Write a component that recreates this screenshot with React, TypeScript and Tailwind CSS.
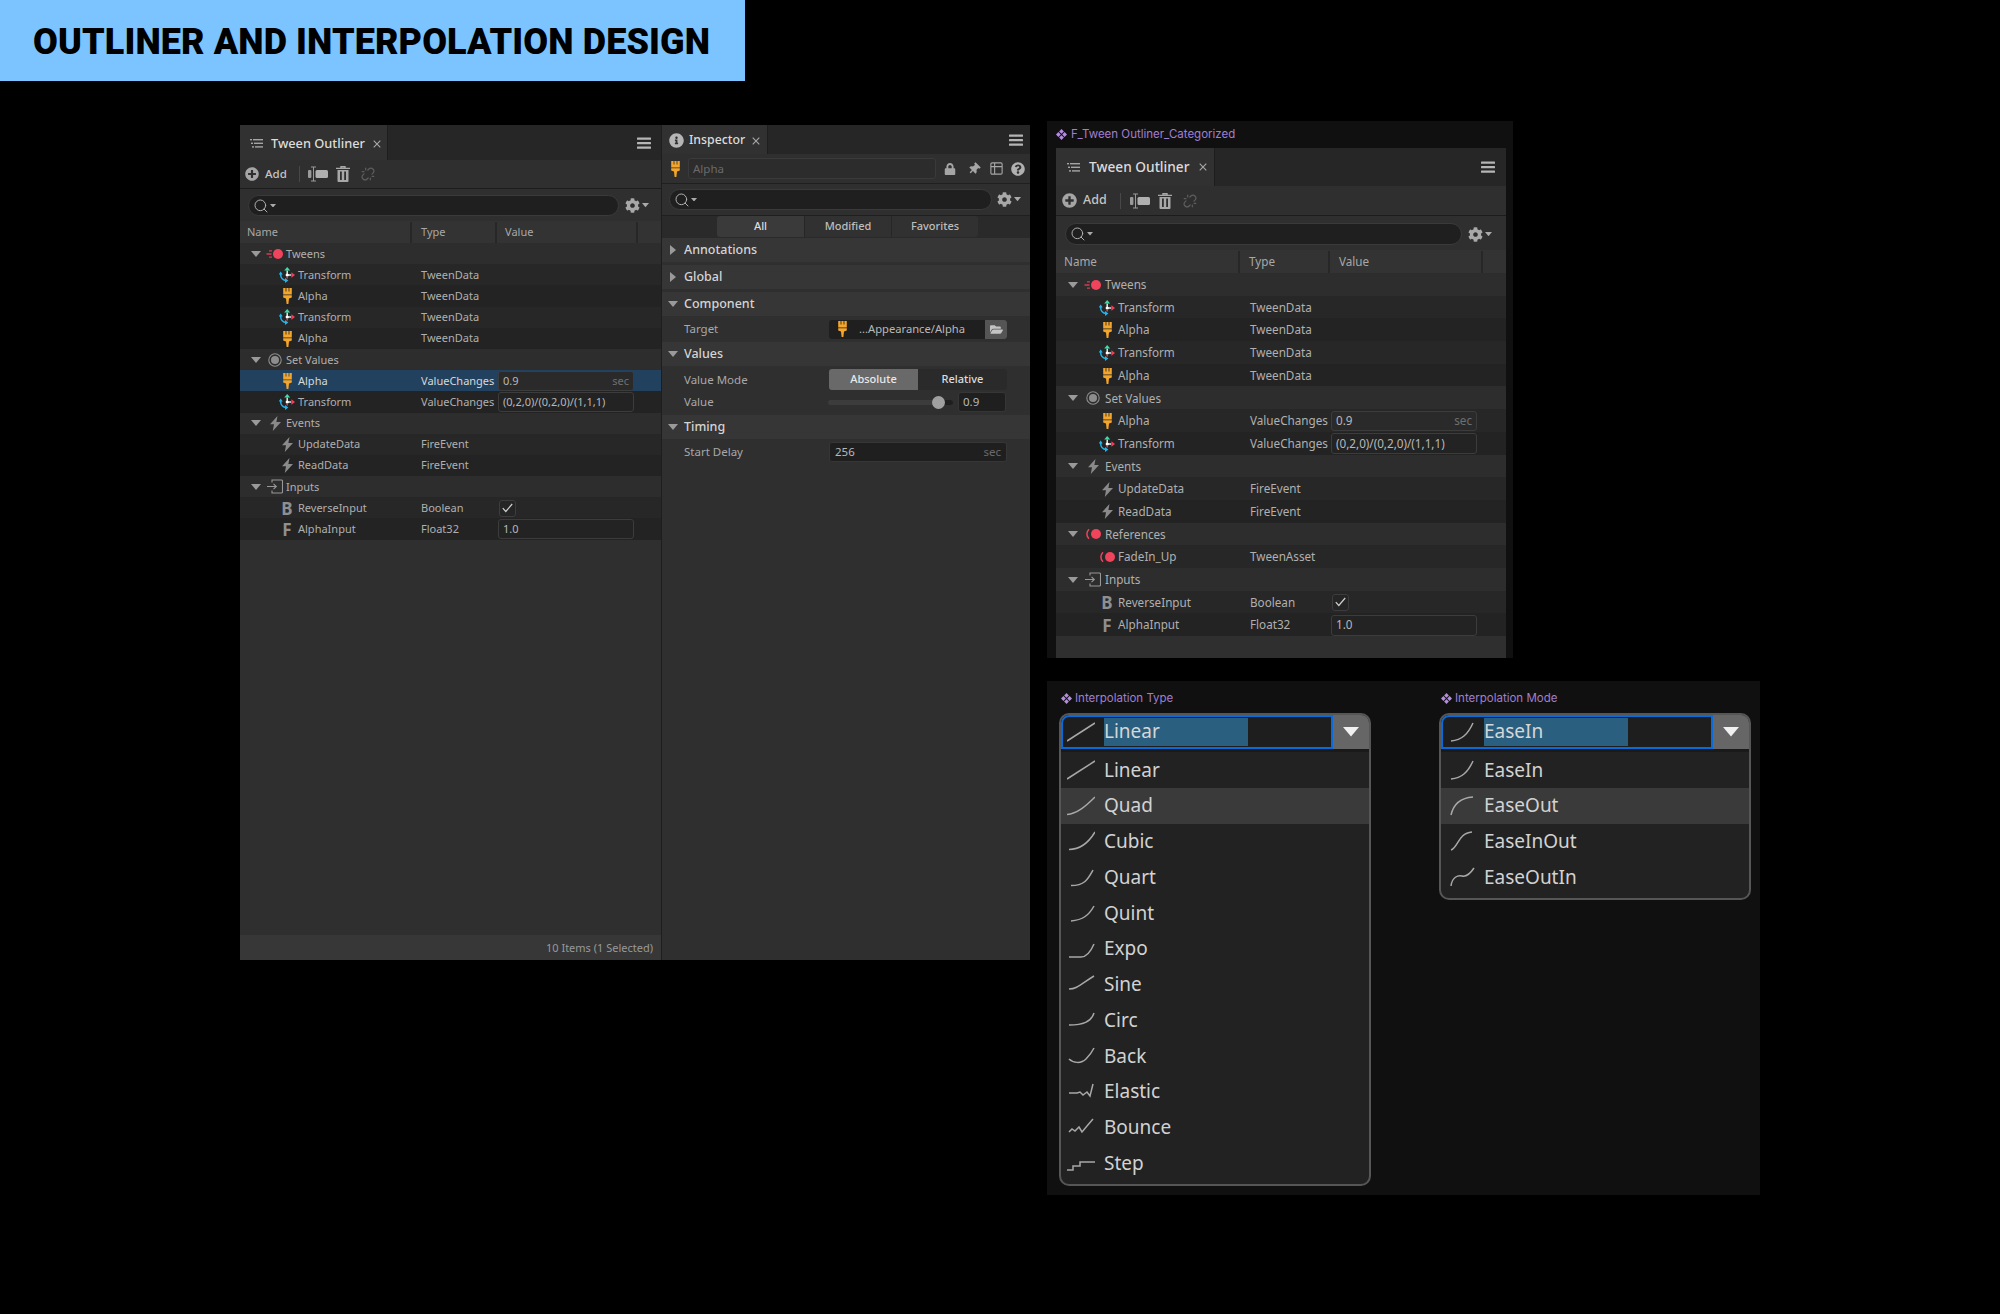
import React from "react";
import { FaCog, FaPlusCircle, FaLock, FaThumbtack, FaQuestionCircle, FaInfoCircle, FaFolderOpen } from "react-icons/fa";
import { Table2, Unlink, Search } from "lucide-react";

type Size = "small" | "big";

const Hamburger = () => (
  <svg width="14" height="12" viewBox="0 0 14 12" fill="#b5b5b5">
    <rect x="0" y="0.5" width="14" height="2.2" rx="0.5" />
    <rect x="0" y="5" width="14" height="2.2" rx="0.5" />
    <rect x="0" y="9.5" width="14" height="2.2" rx="0.5" />
  </svg>
);
const ListIcon = () => (
  <svg width="13" height="9" viewBox="0 0 13 9" fill="#a5a5a5">
    <rect x="0" y="0" width="2" height="1.4" />
    <rect x="3" y="0" width="10" height="1.4" />
    <rect x="1" y="3.6" width="2" height="1.4" />
    <rect x="4" y="3.6" width="9" height="1.4" />
    <rect x="2" y="7.2" width="2" height="1.4" />
    <rect x="5" y="7.2" width="8" height="1.4" />
  </svg>
);
const CloseX = () => (
  <svg width="8" height="8" viewBox="0 0 8 8" fill="none">
    <path d="M0.7 0.7l6.6 6.6M7.3 0.7L0.7 7.3" stroke="#a8a8a8" strokeWidth="1.1" />
  </svg>
);
const SplitIcon = () => (
  <svg width="20" height="16" viewBox="0 0 20 16">
    <path d="M3 1h5M3 15h5M5.5 1v14" stroke="#9a9a9a" strokeWidth="1" fill="none" />
    <rect x="0" y="4" width="3.4" height="8" rx="1" fill="#9a9a9a" />
    <rect x="7.5" y="4" width="12.5" height="8" rx="1.5" fill="#b0b0b0" />
  </svg>
);
const TrashIcon = () => (
  <svg width="14" height="16" viewBox="0 0 14 16">
    <path d="M0 2.4h14M5 2V.7h4V2" stroke="#a8a8a8" strokeWidth="1.4" fill="none" />
    <path d="M1.5 4h11v11a1 1 0 0 1-1 1h-9a1 1 0 0 1-1-1z" fill="#a8a8a8" />
    <rect x="4" y="5.5" width="1.8" height="8.5" fill="#2f2f2f" />
    <rect x="8.2" y="5.5" width="1.8" height="8.5" fill="#2f2f2f" />
  </svg>
);
const Caret = ({ color = "#aaaaaa", w = 6 }: { color?: string; w?: number }) => (
  <svg width={w} height={w * 0.6} viewBox="0 0 10 6"><path d="M0 0h10L5 6z" fill={color} /></svg>
);
const Diamonds = () => (
  <svg width="11" height="11" viewBox="0 0 11 11" fill="#b48ce0">
    <path d="M5.5 0l2.4 2.4-2.4 2.4-2.4-2.4zM2.4 3.1l2.4 2.4-2.4 2.4L0 5.5zM8.6 3.1L11 5.5 8.6 7.9 6.2 5.5zM5.5 6.2l2.4 2.4L5.5 11 3.1 8.6z" />
  </svg>
);
const Transform = () => (
  <svg width="16" height="16" viewBox="0 0 16 16" fill="none">
    <path d="M8.2 8V3.5" stroke="#ecf7f3" strokeWidth="1.4" />
    <path d="M8.2 0l3 3.6h-6z" fill="#3fdca5" />
    <path d="M8.2 8h4" stroke="#f4f4f4" strokeWidth="1.4" />
    <path d="M16 8l-3.6-2.8v5.6z" fill="#f2405a" />
    <path d="M1.7 6.5v1.3a5.6 5.6 0 0 0 4.8 5.6" stroke="#23b4ea" strokeWidth="1.5" />
    <path d="M-0.3 7.4L1.7 4.4l2 3zM6 11l3.4 2.4L6 16z" fill="#23b4ea" />
    <circle cx="8.2" cy="8" r="1.6" fill="#ffffff" />
    <path d="M8.2 9.4v2" stroke="#f04a60" strokeWidth="1.3" />
  </svg>
);
const Brush = () => (
  <svg width="11" height="16" viewBox="0 0 11 16" fill="#f3a62b">
    <path d="M1.2 0h2.4v3.4h0.8V0h2.2v3.4h0.8V0h2.4v6.4H1.2z" />
    <path d="M1.2 7.2h8.6v2.2L7 10.4 6.4 16H4.6L4 10.4 1.2 9.4z" />
  </svg>
);
const TweenDot = () => (
  <svg width="18" height="12" viewBox="0 0 18 12" fill="none">
    <circle cx="12" cy="6" r="5" fill="#f0435c" />
    <path d="M3 2.8h3M0.5 6h5M3 9.2h3" stroke="#d13b50" strokeWidth="1.3" />
  </svg>
);
const RefDot = () => (
  <svg width="17" height="12" viewBox="0 0 17 12" fill="none">
    <circle cx="11" cy="6" r="5" fill="#f0435c" />
    <path d="M4 1.2a6.5 6.5 0 0 0 0 9.6" stroke="#f0435c" strokeWidth="1.5" />
  </svg>
);
const Ring = () => (
  <svg width="14" height="14" viewBox="0 0 14 14" fill="none">
    <circle cx="7" cy="7" r="6.2" stroke="#8d8d8d" strokeWidth="1.1" />
    <circle cx="7" cy="7" r="4" fill="#8d8d8d" />
  </svg>
);
const Bolt = () => (
  <svg width="11" height="15" viewBox="0 0 11 15" fill="#8a8a8a">
    <path d="M7.5 0L0 8.2h4L2.8 15 11 6H6.4z" />
  </svg>
);
const InputIcon = () => (
  <svg width="16" height="15" viewBox="0 0 16 15" fill="none" stroke="#989898" strokeWidth="1.1">
    <path d="M5 3.5V1h9.5a1 1 0 0 1 1 1v11a1 1 0 0 1-1 1H5v-2.5" />
    <path d="M0 7.5h9M6.5 4.8l2.8 2.7-2.8 2.7" />
  </svg>
);
const Check = () => (
  <svg width="11" height="10" viewBox="0 0 11 10" fill="none">
    <path d="M0.8 5.2l3 3.3L10.2 1" stroke="#d0d0d0" strokeWidth="1.2" />
  </svg>
);

const Letter = ({ c }: { c: string }) => (
  <span className="text-[17px] font-bold leading-none text-[#8f8f8f]">{c}</span>
);

const icons: Record<string, React.ReactNode> = {
  transform: <Transform />,
  brush: <Brush />,
  tween: <TweenDot />,
  ref: <RefDot />,
  ring: <Ring />,
  bolt: <Bolt />,
  input: <InputIcon />,
  b: <Letter c="B" />,
  f: <Letter c="F" />,
};

type RowData = {
  kind: "cat" | "leaf";
  icon: string;
  name: string;
  type?: string;
  value?: string;
  sec?: boolean;
  check?: boolean;
  selected?: boolean;
  tone?: 0 | 1;
};

const smallRows: RowData[] = [
  { kind: "cat", icon: "tween", name: "Tweens" },
  { kind: "leaf", icon: "transform", name: "Transform", type: "TweenData", tone: 0 },
  { kind: "leaf", icon: "brush", name: "Alpha", type: "TweenData", tone: 1 },
  { kind: "leaf", icon: "transform", name: "Transform", type: "TweenData", tone: 0 },
  { kind: "leaf", icon: "brush", name: "Alpha", type: "TweenData", tone: 1 },
  { kind: "cat", icon: "ring", name: "Set Values" },
  { kind: "leaf", icon: "brush", name: "Alpha", type: "ValueChanges", value: "0.9", sec: true, selected: true },
  { kind: "leaf", icon: "transform", name: "Transform", type: "ValueChanges", value: "(0,2,0)/(0,2,0)/(1,1,1)", tone: 1 },
  { kind: "cat", icon: "bolt", name: "Events" },
  { kind: "leaf", icon: "bolt", name: "UpdateData", type: "FireEvent", tone: 0 },
  { kind: "leaf", icon: "bolt", name: "ReadData", type: "FireEvent", tone: 1 },
  { kind: "cat", icon: "input", name: "Inputs" },
  { kind: "leaf", icon: "b", name: "ReverseInput", type: "Boolean", check: true, tone: 0 },
  { kind: "leaf", icon: "f", name: "AlphaInput", type: "Float32", value: "1.0", tone: 1 },
];

const bigRows: RowData[] = [
  ...smallRows.slice(0, 6),
  { kind: "leaf", icon: "brush", name: "Alpha", type: "ValueChanges", value: "0.9", sec: true, tone: 0 },
  ...smallRows.slice(7, 11),
  { kind: "cat", icon: "ref", name: "References" },
  { kind: "leaf", icon: "ref", name: "FadeIn_Up", type: "TweenAsset", tone: 0 },
  ...smallRows.slice(11),
];

const sz = {
  small: {
    panel: "w-[421px] h-full",
    tabbar: "h-[35px]",
    tab: "w-[148px] pl-[10px] pt-[2px]",
    tabText: "ml-[8px] text-[12.8px]",
    closeMl: "ml-[8px]",
    menuPr: "pr-[10px]",
    toolbar: "h-[29px] pl-[5px]",
    addText: "ml-[6px] text-[11.5px]",
    sepMl: "ml-[12px]",
    splitMl: "ml-[8px]",
    trashMl: "ml-[8px]",
    unlinkMl: "ml-[11px]",
    searchRow: "h-[31px] mt-[1px] pl-[8px]",
    search: "w-[371px] h-[21px]",
    gearMl: "ml-[6px]",
    header: "h-[22px] text-[11px] pt-[1px]",
    col1: "w-[172px]",
    col2: "w-[85px]",
    col3: "w-[141px]",
    col1Pad: "pl-[7px]",
    col2Pad: "pl-[9px]",
    col3Pad: "pl-[8px]",
    row: "h-[21.2px] text-[11px] pt-[0.5px]",
    catPad: "pl-[11px]",
    catIcon: "ml-[5px] mr-[2px]",
    leafPad: "pl-[38px]",
    leafIcon: "mr-[2px]",
    typePad: "pl-[9px]",
    field: "w-[136px]",
  },
  big: {
    panel: "w-[450px] h-full",
    tabbar: "h-[38px]",
    tab: "w-[159px] pl-[11px]",
    tabText: "ml-[9px] text-[13.7px]",
    closeMl: "ml-[9px]",
    menuPr: "pr-[11px]",
    toolbar: "h-[30px] pl-[6px]",
    addText: "ml-[6px] text-[12.5px]",
    sepMl: "ml-[13px]",
    splitMl: "ml-[9px]",
    trashMl: "ml-[8px]",
    unlinkMl: "ml-[11px]",
    searchRow: "h-[32px] mt-[2px] pl-[9px]",
    search: "w-[397px] h-[22px]",
    gearMl: "ml-[6px]",
    header: "h-[23px] text-[11.7px] pt-[1px]",
    col1: "w-[184px]",
    col2: "w-[90px]",
    col3: "w-[153px]",
    col1Pad: "pl-[8px]",
    col2Pad: "pl-[9px]",
    col3Pad: "pl-[9px]",
    row: "h-[22.7px] text-[11.7px] pt-[1px]",
    catPad: "pl-[12px]",
    catIcon: "ml-[6px] mr-[3px]",
    leafPad: "pl-[42px]",
    leafIcon: "mr-[2px]",
    typePad: "pl-[10px]",
    field: "w-[146px]",
  },
};

function OutlinerRow({ r, s }: { r: RowData; s: typeof sz.small }) {
  const bg = r.selected
    ? "bg-[#21415f]"
    : r.kind === "cat"
      ? "bg-[#2d2d2d]"
      : r.tone === 0
        ? "bg-[#272727]"
        : "bg-[#232323]";
  const nameColor = r.selected ? "text-[#d8d8d8]" : "text-[#b0b0b0]";
  return (
    <div className={`flex items-center ${s.row} ${bg}`}>
      <div className={`${s.col1} shrink-0 flex items-center ${r.kind === "cat" ? s.catPad : s.leafPad}`}>
        {r.kind === "cat" && (
          <span className="w-[10px] flex justify-center">
            <Caret color="#9a9a9a" w={10} />
          </span>
        )}
        <span className={`w-[18px] h-[16px] flex items-center justify-center shrink-0 ${r.kind === "cat" ? s.catIcon : s.leafIcon}`}>
          {icons[r.icon]}
        </span>
        <span className={nameColor}>{r.name}</span>
      </div>
      <div className={`${s.col2} shrink-0 ${s.typePad} whitespace-nowrap ${r.selected ? "text-[#d8d8d8]" : "text-[#b0b0b0]"}`}>
        {r.type}
      </div>
      <div className="flex-1 h-full flex items-center pl-[1px]">
        {r.check && (
          <span className="ml-[1px] w-[17px] h-[17px] rounded-[3px] bg-[#252525] border border-[#3c3c3c] flex items-center justify-center">
            <Check />
          </span>
        )}
        {r.value && (
          <div
            className={`${s.field} h-[calc(100%-1px)] rounded-[3px] border border-[#3c3c3c] flex items-center justify-between px-[4px] text-[#b8b8b8] ${r.sec ? "bg-[#2a2a2a]" : "bg-[#232323]"}`}
          >
            <span>{r.value}</span>
            {r.sec && <span className="text-[#6f6f6f]">sec</span>}
          </div>
        )}
      </div>
    </div>
  );
}

function Outliner({ size, rows, footer }: { size: Size; rows: RowData[]; footer?: string }) {
  const s = sz[size];
  const big = size === "big";
  return (
    <div className={`${s.panel} flex flex-col bg-[#2f2f2f]`}>
      <div className={`${s.tabbar} flex items-stretch justify-between bg-[#262626] ${s.menuPr} shrink-0`}>
        <div className={`${s.tab} flex items-center bg-[#313131] border-r border-[#1e1e1e]`}>
          <ListIcon />
          <span className={`${s.tabText} font-medium text-[#dcdcdc]`}>Tween Outliner</span>
          <span className={`${s.closeMl} flex`}><CloseX /></span>
        </div>
        <div className="flex items-center">
          <Hamburger />
        </div>
      </div>
      <div className={`${s.toolbar} flex items-center bg-[#2f2f2f] border-b border-[#1c1c1c] shrink-0`}>
        <FaPlusCircle size={big ? 15 : 14} color="#a5a5a5" />
        <span className={`${s.addText} font-medium text-[#c4c4c4]`}>Add</span>
        <span className={`${s.sepMl} w-[1px] h-[16px] bg-[#484848]`} />
        <span className={s.splitMl}><SplitIcon /></span>
        <span className={`${s.trashMl} flex`}><TrashIcon /></span>
        <span className={`${s.unlinkMl} flex`}><Unlink size={14} color="#5e5e5e" strokeWidth={2} /></span>
      </div>
      <div className={`${s.searchRow} flex items-center bg-[#2f2f2f] shrink-0`}>
        <div className={`${s.search} rounded-full bg-[#1f1f1f] border border-[#3a3a3a] flex items-center pl-[4px] gap-[1px]`}>
          <Search size={16} color="#b0b0b0" strokeWidth={1.5} />
          <Caret />
        </div>
        <span className={`${s.gearMl} flex items-center gap-[2px]`}>
          <FaCog size={15} color="#a8a8a8" />
          <Caret w={7} />
        </span>
      </div>
      <div className={`${s.header} flex items-stretch bg-[#333333] text-[#a8a8a8] shrink-0`}>
        <div className={`${s.col1} ${s.col1Pad} flex items-center border-r-2 border-[#272727]`}>Name</div>
        <div className={`${s.col2} ${s.col2Pad} flex items-center border-r-2 border-[#272727]`}>Type</div>
        <div className={`${s.col3} ${s.col3Pad} flex items-center border-r-2 border-[#272727]`}>Value</div>
      </div>
      <div className="flex flex-col shrink-0">
        {rows.map((r, i) => (
          <OutlinerRow key={i} r={r} s={s} />
        ))}
      </div>
      <div className="flex-1" />
      {footer && (
        <div className="h-[25px] bg-[#373737] flex items-center justify-end pr-[8px] pt-[1px] text-[11px] text-[#999999] shrink-0">
          {footer}
        </div>
      )}
    </div>
  );
}

function Section({ title, open, mt }: { title: string; open?: boolean; mt?: boolean }) {
  return (
    <div className={`h-[24px] flex items-center bg-[#363636] shrink-0 ${mt ? "mt-[3px]" : ""}`}>
      <span className="w-[22px] flex justify-center">
        {open ? (
          <Caret color="#9a9a9a" w={10} />
        ) : (
          <svg width="6" height="10" viewBox="0 0 6 10"><path d="M0 0l6 5-6 5z" fill="#9a9a9a" /></svg>
        )}
      </span>
      <span className="text-[12.5px] font-medium text-[#d4d4d4] pt-[1px]">{title}</span>
    </div>
  );
}

function Inspector() {
  return (
    <div className="w-[369px] h-full flex flex-col bg-[#2f2f2f] border-l border-[#1e1e1e] text-[11.5px]">
      <div className="h-[29px] flex items-stretch justify-between bg-[#262626] pr-[7px] shrink-0">
        <div className="w-[106px] flex items-center pl-[7px] pt-[2px] bg-[#313131] border-r border-[#1e1e1e]">
          <FaInfoCircle size={15} color="#b5b5b5" />
          <span className="ml-[5px] text-[12.3px] font-medium text-[#dcdcdc]">Inspector</span>
          <span className="ml-[7px] flex"><CloseX /></span>
        </div>
        <div className="flex items-center"><Hamburger /></div>
      </div>
      <div className="h-[30px] flex items-center pl-[8px] bg-[#2f2f2f] border-b border-[#1f1f1f] shrink-0">
        <Brush />
        <div className="ml-[7px] w-[248px] h-[21px] rounded-[3px] bg-[#2c2c2c] border border-[#3a3a3a] flex items-center pl-[4px] text-[#6a6a6a]">
          Alpha
        </div>
        <span className="ml-[8px]"><FaLock size={12} color="#a5a5a5" /></span>
        <span className="ml-[12px] rotate-45"><FaThumbtack size={12} color="#a5a5a5" /></span>
        <span className="ml-[9px]"><Table2 size={15} color="#a5a5a5" strokeWidth={1.8} /></span>
        <span className="ml-[7px]"><FaQuestionCircle size={14} color="#b0b0b0" /></span>
      </div>
      <div className="h-[31px] flex items-center pl-[7px] bg-[#2f2f2f] shrink-0">
        <div className="w-[323px] h-[21px] rounded-full bg-[#1f1f1f] border border-[#3a3a3a] flex items-center pl-[4px] gap-[1px]">
          <Search size={16} color="#b0b0b0" strokeWidth={1.5} />
          <Caret />
        </div>
        <span className="ml-[5px] flex items-center gap-[2px]">
          <FaCog size={15} color="#a8a8a8" />
          <Caret w={7} />
        </span>
      </div>
      <div className="h-[23px] pl-[55px] flex items-stretch bg-[#2a2a2a] border-t border-[#1f1f1f] shrink-0">
        <div className="w-[87px] h-[21px] bg-[#3a3a3a] rounded-l-[3px] flex items-center justify-center font-medium text-[#dcdcdc] text-[11px]">All</div>
        <div className="w-[87px] h-[21px] bg-[#313131] border-l border-[#262626] flex items-center justify-center font-medium text-[#bdbdbd] text-[11px]">Modified</div>
        <div className="w-[87px] h-[21px] bg-[#313131] border-l border-[#262626] rounded-r-[3px] flex items-center justify-center font-medium text-[#bdbdbd] text-[11px]">Favorites</div>
      </div>
      <Section title="Annotations" />
      <Section title="Global" mt />
      <Section title="Component" open mt />
      <div className="h-[26px] flex items-center pl-[22px] shrink-0">
        <span className="w-[145px] text-[#a8a8a8]">Target</span>
        <div className="w-[178px] h-[19px] rounded-[3px] bg-[#1f1f1f] flex items-center overflow-hidden">
          <span className="ml-[8px] flex"><Brush /></span>
          <span className="ml-[11px] text-[11.2px] text-[#b8b8b8]">...Appearance/Alpha</span>
          <span className="ml-auto w-[22px] h-full bg-[#555555] flex items-center justify-center">
            <FaFolderOpen size={13} color="#c4c4c4" />
          </span>
        </div>
      </div>
      <Section title="Values" open />
      <div className="mt-[3px] h-[21px] flex items-center pl-[22px] shrink-0">
        <span className="w-[145px] text-[#a8a8a8]">Value Mode</span>
        <div className="w-[178px] h-full flex rounded-[3px] overflow-hidden font-medium text-[11px]">
          <span className="w-[89px] bg-[#696969] text-[#e8e8e8] flex items-center justify-center">Absolute</span>
          <span className="flex-1 bg-[#2a2a2a] text-[#dcdcdc] flex items-center justify-center">Relative</span>
        </div>
      </div>
      <div className="mt-[2px] h-[20px] flex items-center pl-[22px] shrink-0">
        <span className="w-[144px] text-[#a8a8a8]">Value</span>
        <div className="relative w-[125px] h-[5px] rounded-full bg-[#3c3c3c]">
          <span className="absolute right-0 w-[15px] h-full rounded-r-full bg-[#1f1f1f]" />
          <span className="absolute left-[104px] top-[-4px] w-[13px] h-[13px] rounded-full bg-[#a0a0a0]" />
        </div>
        <div className="ml-[5px] w-[48px] h-[20px] rounded-[3px] bg-[#1f1f1f] border border-[#363636] flex items-center pl-[4px] text-[#b8b8b8]">0.9</div>
      </div>
      <Section title="Timing" open mt />
      <div className="h-[26px] flex items-center pl-[22px] shrink-0">
        <span className="w-[145px] text-[#a8a8a8]">Start Delay</span>
        <div className="w-[178px] h-[20px] rounded-[3px] bg-[#1f1f1f] border border-[#363636] flex items-center justify-between px-[5px] text-[#b8b8b8]">
          <span>256</span>
          <span className="text-[#6a6a6a]">sec</span>
        </div>
      </div>
      <div className="flex-1" />
    </div>
  );
}

const curves: Record<string, string> = {
  Linear: "M0 19L28 1",
  Quad: "M0 18.5C10 17.5 18 11 28 1",
  Cubic: "M2 18.5C14 18.5 22 11 28 1",
  Quart: "M4 18.5C18 18.5 21 12 26 3",
  Quint: "M4 18C16 17 22 12 27 3",
  Expo: "M2 18H14C20 18 24 12 27 5",
  Sine: "M2 15C10 15 14 10 27 2",
  Circ: "M2 15C16 15 24 12 27 3",
  Back: "M2 13C6 17 14 18 19 13C22 10 25 6 27 2",
  Elastic: "M2 11H10L13 10L16 13L20 10L23 14L26 2",
  Bounce: "M2 15L5 12L8 14L12 10L15 15L20 9L26 2",
  Step: "M0 17H6V13H13V9H28",
  EaseIn: "M1 19C12 18 18 12 23 1",
  EaseOut: "M1 19C3 10 9 2 23 1",
  EaseInOut: "M1 19C8 17 8 2 22 1",
  EaseOutIn: "M1 19C2 10 8 8 12 9C16 10 20 7 24 1",
};

const Curve = ({ n }: { n: string }) => (
  <svg width="28" height="20" viewBox="0 0 28 20" fill="none" className="shrink-0">
    <path d={curves[n]} stroke="#a8a8a8" strokeWidth="1.5" />
  </svg>
);

function Dropdown({
  label, value, items, rowPad, inputPad, gap,
}: { label: string; value: string; items: string[]; rowPad: string; inputPad: string; gap: string }) {
  return (
    <div className="w-[312px]">
      <div className="h-[32px] flex items-center pl-[2px] pt-[3px] gap-[3px] text-[11.5px] font-['Inter'] text-[#a07fd0]">
        <Diamonds />
        <span>{label}</span>
      </div>
      <div className="rounded-[10px] border-2 border-[#565656] bg-[#222222] overflow-hidden">
        <div className="h-[34px] flex items-stretch">
          <div className={`w-[272px] border-2 border-[#0a6ad8] rounded-tl-[8px] bg-[#1e1e1e] flex items-center ${inputPad}`}>
            <Curve n={value} />
            <span className={`w-[144px] h-[28px] ${gap} bg-[#2b5f80] flex items-center text-[19px] text-[#d6d6d6] pb-[1px]`}>{value}</span>
          </div>
          <div className="flex-1 bg-[#666666] flex items-center justify-center">
            <Caret color="#f0f0f0" w={16} />
          </div>
        </div>
        <div className="h-[3px] bg-[#1a1a1a]" />
        <div className="flex flex-col">
          {items.map((it, i) => (
            <div key={it} className={`h-[35.75px] flex items-center ${rowPad} ${i === 1 ? "bg-[#3a3a3a]" : ""}`}>
              <Curve n={it} />
              <span className={`${gap} text-[19px] text-[#d2d2d2]`}>{it}</span>
            </div>
          ))}
        </div>
        <div className="h-[3px]" />
      </div>
    </div>
  );
}

export default function App() {
  return (
    <div className="w-[2000px] h-[1314px] bg-black overflow-hidden font-['Noto_Sans',sans-serif]">
      <div className="w-[745px] h-[81px] bg-[#7cc4ff] flex items-center pl-[33px] pt-[2px]">
        <h1 className="font-['Roboto',sans-serif] font-black text-[36px] tracking-[0.1px] leading-none text-black whitespace-nowrap">
          OUTLINER AND INTERPOLATION DESIGN
        </h1>
      </div>
      <div className="flex items-start pl-[240px] pt-[40px]">
        <div className="mt-[4px] w-[790px] h-[835px] flex">
          <Outliner size="small" rows={smallRows} footer="10 Items (1 Selected)" />
          <Inspector />
        </div>
        <div className="ml-[17px] w-[713px] flex flex-col">
          <div className="w-[466px] h-[537px] bg-[#101010] flex flex-col">
            <div className="h-[27px] flex items-center pl-[9px] gap-[4px] text-[11.5px] font-['Inter'] text-[#a07fd0]">
              <Diamonds />
              <span>F_Tween Outliner_Categorized</span>
            </div>
            <div className="ml-[9px] flex-1 min-h-0">
              <Outliner size="big" rows={bigRows} />
            </div>
          </div>
          <div className="mt-[23px] h-[514px] bg-[#101010] flex items-start pl-[12px] gap-[68px]">
            <Dropdown
              label="Interpolation Type"
              value="Linear"
              rowPad="pl-[6px]"
              inputPad="pl-[4px]"
              gap="ml-[9px]"
              items={["Linear", "Quad", "Cubic", "Quart", "Quint", "Expo", "Sine", "Circ", "Back", "Elastic", "Bounce", "Step"]}
            />
            <Dropdown
              label="Interpolation Mode"
              value="EaseIn"
              rowPad="pl-[9px]"
              inputPad="pl-[7px]"
              gap="ml-[6px]"
              items={["EaseIn", "EaseOut", "EaseInOut", "EaseOutIn"]}
            />
          </div>
        </div>
      </div>
    </div>
  );
}
